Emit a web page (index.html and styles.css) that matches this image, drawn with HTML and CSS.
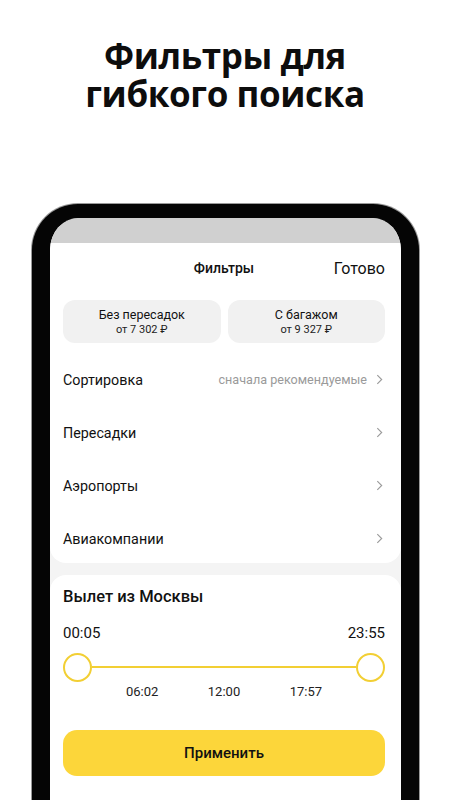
FILE: index.html
```html
<!DOCTYPE html>
<html lang="ru">
<head>
<meta charset="utf-8">
<link rel="stylesheet" href="styles.css">
</head>
<body>
<h1 class="title"><span class="title-line">Фильтры для</span><span class="title-line">гибкого поиска</span></h1>
<div class="phone">
  <div class="screen">
    <div class="status"></div>
    <div class="card top-card">
      <div class="header">
        <span class="header-title">Фильтры</span>
        <span class="header-done">Готово</span>
      </div>
      <div class="chips">
        <div class="chip"><span class="chip-title">Без пересадок</span><span class="chip-sub">от 7 302 ₽</span></div>
        <div class="chip"><span class="chip-title">С багажом</span><span class="chip-sub">от 9 327 ₽</span></div>
      </div>
      <div class="rows">
        <div class="row"><span class="row-label">Сортировка</span><span class="row-value">сначала рекомендуемые</span><svg class="chev" viewBox="0 0 8 12"><path d="M1.5 1 L6.5 6 L1.5 11" fill="none" stroke="#9a9a9a" stroke-width="1.3"/></svg></div>
        <div class="row"><span class="row-label">Пересадки</span><span class="row-value"></span><svg class="chev" viewBox="0 0 8 12"><path d="M1.5 1 L6.5 6 L1.5 11" fill="none" stroke="#9a9a9a" stroke-width="1.3"/></svg></div>
        <div class="row"><span class="row-label">Аэропорты</span><span class="row-value"></span><svg class="chev" viewBox="0 0 8 12"><path d="M1.5 1 L6.5 6 L1.5 11" fill="none" stroke="#9a9a9a" stroke-width="1.3"/></svg></div>
        <div class="row"><span class="row-label">Авиакомпании</span><span class="row-value"></span><svg class="chev" viewBox="0 0 8 12"><path d="M1.5 1 L6.5 6 L1.5 11" fill="none" stroke="#9a9a9a" stroke-width="1.3"/></svg></div>
      </div>
    </div>
    <div class="card time-card">
      <div class="time-title">Вылет из Москвы</div>
      <div class="time-ends"><span>00:05</span><span>23:55</span></div>
      <div class="slider">
        <span class="knob"></span>
        <span class="track"></span>
        <span class="knob"></span>
      </div>
      <div class="ticks"><span>06:02</span><span>12:00</span><span>17:57</span></div>
      <button class="apply">Применить</button>
    </div>
  </div>
</div>
</body>
</html>
```
FILE: styles.css
```css
* { box-sizing: border-box; }
html, body { margin: 0; padding: 0; }
body {
  width: 450px;
  height: 800px;
  overflow: hidden;
  background: #fff;
  font-family: Roboto, "Noto Sans", sans-serif;
  color: #111;
}
.title {
  margin: 0;
  padding-top: 37px;
  font-family: "Open Sans", sans-serif;
  font-weight: 700;
  font-size: 35px;
  letter-spacing: -0.4px;
  text-align: center;
  color: #0d0d0d;
}
.title-line {
  display: block;
  height: 38px;
  line-height: 38px;
}
.phone {
  margin: 91px 0 0 32px;
  width: 387px;
  height: 700px;
  border: 18px solid #050505;
  border-top-width: 14px;
  border-bottom: none;
  border-radius: 46px 46px 0 0;
  box-shadow: 0 0 0 1px #9a9a9a, inset 0 0 0 1px #3a3a3a;
  background: #f4f4f4;
  overflow: hidden;
}
.screen {
  display: flex;
  flex-direction: column;
  border-radius: 30px 30px 0 0;
  overflow: hidden;
  background: #f4f4f4;
  height: 100%;
}
.status {
  height: 25px;
  background: #d0d0d0;
  flex: none;
}
.card {
  background: #fff;
  padding: 0 16px 0 13px;
}
.top-card {
  border-radius: 0 0 16px 16px;
  height: 320px;
}
.header {
  height: 50px;
  display: flex;
  align-items: center;
  justify-content: flex-end;
  position: relative;
}
.header-title {
  position: absolute;
  left: 0;
  right: 0;
  text-align: center;
  font-size: 14px;
  font-weight: 500;
}
.header-done {
  font-size: 16px;
  position: relative;
}
.chips {
  margin-top: 7px;
  display: flex;
  gap: 7px;
}
.chip {
  flex: 1;
  height: 43px;
  background: #f1f1f1;
  border-radius: 12px;
  display: flex;
  flex-direction: column;
  align-items: center;
  justify-content: center;
}
.chip-title { font-size: 12.5px; line-height: 16px; }
.chip-sub { font-size: 11px; line-height: 13px; color: #222; }
.rows { margin-top: 10px; }
.row {
  height: 53px;
  display: flex;
  align-items: center;
}
.row-label { font-size: 14.3px; flex: 1; }
.row-value { font-size: 12.6px; color: #9a9a9a; margin-right: 9px; }
.chev { width: 7px; height: 11px; margin-right: 2px; }
.time-card {
  margin-top: 12px;
  border-radius: 16px 16px 0 0;
  flex: 1;
}
.time-title {
  padding-top: 10px;
  height: 44px;
  line-height: 24px;
  font-size: 16.5px;
  font-weight: 500;
}
.time-ends {
  display: flex;
  justify-content: space-between;
  font-size: 15px;
  line-height: 20px;
  height: 20px;
  margin-top: 4px;
}
.slider {
  margin-top: 9px;
  height: 30px;
  display: flex;
  align-items: center;
}
.knob {
  width: 29px;
  height: 29px;
  border: 2px solid #f2cf34;
  border-radius: 50%;
  flex: none;
}
.track {
  flex: 1;
  height: 2px;
  background: #f2cf34;
}
.ticks {
  display: flex;
  justify-content: space-between;
  padding: 0 63px;
  font-size: 13px;
  line-height: 18px;
  margin-top: 1px;
  color: #222;
}
.apply {
  margin-top: 29px;
  width: 100%;
  height: 46px;
  border: none;
  border-radius: 14px;
  background: #fcd63a;
  font-family: Roboto, sans-serif;
  font-size: 15px;
  font-weight: 500;
  color: #111;
}
```
